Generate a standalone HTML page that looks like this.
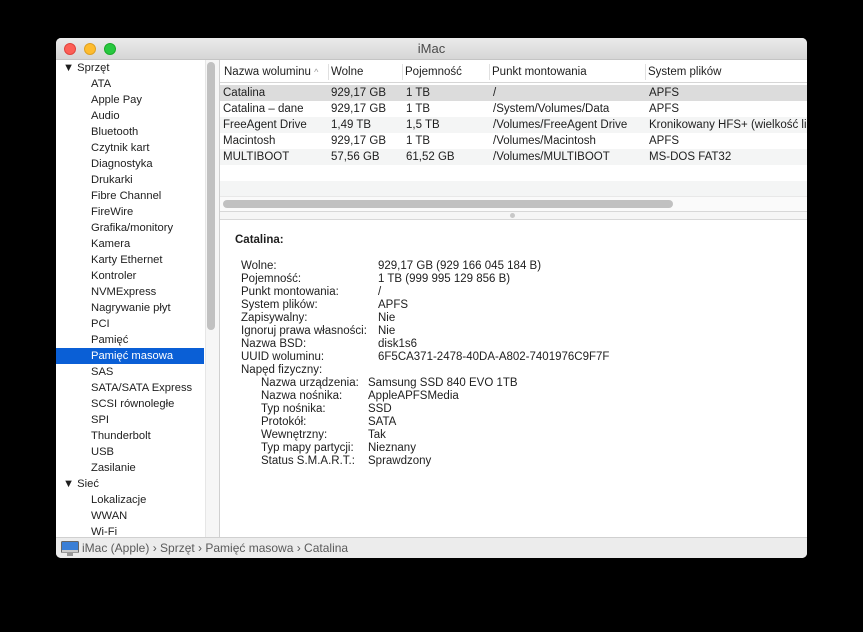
<!DOCTYPE html>
<html><head><meta charset="utf-8"><style>
*{margin:0;padding:0;box-sizing:border-box}
body{width:863px;height:632px;background:#000;font-family:"Liberation Sans",sans-serif;font-size:11.5px;color:#1e1e1e;position:relative;overflow:hidden}
.win{position:absolute;left:56px;top:38px;width:751px;height:520px;background:#fff;border-radius:5px;overflow:hidden}
.title{position:absolute;left:0;top:0;width:751px;height:22px;background:linear-gradient(#ebebeb,#d6d6d6);border-bottom:1px solid #c4c4c4;text-align:center;line-height:22px;font-size:13px;color:#4a4a4a}
.dot{position:absolute;top:5px;width:12px;height:12px;border-radius:50%}
.side{position:absolute;left:0;top:22px;width:149px;height:477px;background:#fff}
.si{position:absolute;left:35px;height:16px;line-height:16px;font-size:11.2px}
.sh{left:7px}
.sel{position:absolute;left:0;top:288px;width:148px;height:16px;background:#0a5fd6}
.track{position:absolute;left:149px;top:22px;width:14px;height:477px;background:#f6f6f6;border-left:1px solid #e6e6e6}
.thumb{position:absolute;left:151px;top:24px;width:8px;height:268px;background:#c1c1c1;border-radius:4px}
.vdiv{position:absolute;left:163px;top:22px;width:1px;height:477px;background:#d0d0d0}
.main{position:absolute;left:164px;top:22px;width:587px;height:477px}
.hdr{position:absolute;left:0;top:0;width:587px;height:23px;border-bottom:1px solid #d6d6d6;background:#fff}
.c{position:absolute;white-space:nowrap;line-height:16px}
.sep{position:absolute;top:4px;width:1px;height:16px;background:#e0e0e0}
.row{position:absolute;left:0;width:587px;height:16px}
.status{position:absolute;left:0;top:499px;width:751px;height:21px;background:#ececec;border-top:1px solid #d0d0d0;font-size:12px;color:#5a5a5a;line-height:20px}
.d{position:absolute;white-space:nowrap;line-height:13px}
</style></head><body>
<div class="win">
<div class="title">iMac
<div class="dot" style="left:8px;background:#fd5f57;border:1px solid #e0443e"></div>
<div class="dot" style="left:28px;background:#febc2e;border:1px solid #dea123"></div>
<div class="dot" style="left:48px;background:#28c840;border:1px solid #1aab29"></div>
</div>
<div class="side">
<div class="sel"></div>
<div class="si sh" style="top:0">▼ Sprzęt</div>
<div class="si" style="top:16px">ATA</div>
<div class="si" style="top:32px">Apple Pay</div>
<div class="si" style="top:48px">Audio</div>
<div class="si" style="top:64px">Bluetooth</div>
<div class="si" style="top:80px">Czytnik kart</div>
<div class="si" style="top:96px">Diagnostyka</div>
<div class="si" style="top:112px">Drukarki</div>
<div class="si" style="top:128px">Fibre Channel</div>
<div class="si" style="top:144px">FireWire</div>
<div class="si" style="top:160px">Grafika/monitory</div>
<div class="si" style="top:176px">Kamera</div>
<div class="si" style="top:192px">Karty Ethernet</div>
<div class="si" style="top:208px">Kontroler</div>
<div class="si" style="top:224px">NVMExpress</div>
<div class="si" style="top:240px">Nagrywanie płyt</div>
<div class="si" style="top:256px">PCI</div>
<div class="si" style="top:272px">Pamięć</div>
<div class="si" style="top:288px;color:#fff">Pamięć masowa</div>
<div class="si" style="top:304px">SAS</div>
<div class="si" style="top:320px">SATA/SATA Express</div>
<div class="si" style="top:336px">SCSI równoległe</div>
<div class="si" style="top:352px">SPI</div>
<div class="si" style="top:368px">Thunderbolt</div>
<div class="si" style="top:384px">USB</div>
<div class="si" style="top:400px">Zasilanie</div>
<div class="si sh" style="top:416px">▼ Sieć</div>
<div class="si" style="top:432px">Lokalizacje</div>
<div class="si" style="top:448px">WWAN</div>
<div class="si" style="top:464px">Wi-Fi</div>
</div>
<div class="track"></div><div class="thumb"></div><div class="vdiv"></div>
<div class="main">
<div class="hdr">
<div class="c" style="left:4px;top:4px">Nazwa woluminu <span style="color:#999;font-size:9px">^</span></div>
<div class="sep" style="left:108px"></div><div class="c" style="left:111px;top:4px">Wolne</div>
<div class="sep" style="left:182px"></div><div class="c" style="left:185px;top:4px">Pojemność</div>
<div class="sep" style="left:269px"></div><div class="c" style="left:272px;top:4px">Punkt montowania</div>
<div class="sep" style="left:425px"></div><div class="c" style="left:428px;top:4px">System plików</div>
</div>
<div class="row" style="top:25px;background:#dcdcdc"></div>
<div class="row" style="top:41px;background:#fff"></div>
<div class="row" style="top:57px;background:#f4f5f5"></div>
<div class="row" style="top:73px;background:#fff"></div>
<div class="row" style="top:89px;background:#f4f5f5"></div>
<div class="row" style="top:105px;background:#fff"></div>
<div class="row" style="top:121px;background:#f4f5f5;height:15px"></div>
<div class="c" style="left:3px;top:25px">Catalina</div><div class="c" style="left:111px;top:25px">929,17 GB</div><div class="c" style="left:186px;top:25px">1 TB</div><div class="c" style="left:273px;top:25px">/</div><div class="c" style="left:429px;top:25px">APFS</div>
<div class="c" style="left:3px;top:41px">Catalina – dane</div><div class="c" style="left:111px;top:41px">929,17 GB</div><div class="c" style="left:186px;top:41px">1 TB</div><div class="c" style="left:273px;top:41px">/System/Volumes/Data</div><div class="c" style="left:429px;top:41px">APFS</div>
<div class="c" style="left:3px;top:57px">FreeAgent Drive</div><div class="c" style="left:111px;top:57px">1,49 TB</div><div class="c" style="left:186px;top:57px">1,5 TB</div><div class="c" style="left:273px;top:57px">/Volumes/FreeAgent Drive</div><div class="c" style="left:429px;top:57px">Kronikowany HFS+ (wielkość li</div>
<div class="c" style="left:3px;top:73px">Macintosh</div><div class="c" style="left:111px;top:73px">929,17 GB</div><div class="c" style="left:186px;top:73px">1 TB</div><div class="c" style="left:273px;top:73px">/Volumes/Macintosh</div><div class="c" style="left:429px;top:73px">APFS</div>
<div class="c" style="left:3px;top:89px">MULTIBOOT</div><div class="c" style="left:111px;top:89px">57,56 GB</div><div class="c" style="left:186px;top:89px">61,52 GB</div><div class="c" style="left:273px;top:89px">/Volumes/MULTIBOOT</div><div class="c" style="left:429px;top:89px">MS-DOS FAT32</div>
<div style="position:absolute;left:0;top:136px;width:587px;height:15px;background:#fafafa;border-top:1px solid #e8e8e8"></div>
<div style="position:absolute;left:3px;top:140px;width:450px;height:8px;background:#c1c1c1;border-radius:4px"></div>
<div style="position:absolute;left:0;top:151px;width:587px;height:9px;background:#f6f6f6;border-top:1px solid #d8d8d8;border-bottom:1px solid #d8d8d8"></div>
<div style="position:absolute;left:290px;top:153px;width:5px;height:5px;border-radius:50%;background:#c8c8c8"></div>
<div class="d" style="left:15px;top:174px;font-weight:bold">Catalina:</div>
<div class="d" style="left:21px;top:200px">Wolne:<br>Pojemność:<br>Punkt montowania:<br>System plików:<br>Zapisywalny:<br>Ignoruj prawa własności:<br>Nazwa BSD:<br>UUID woluminu:<br>Napęd fizyczny:</div>
<div class="d" style="left:158px;top:200px">929,17 GB (929 166 045 184 B)<br>1 TB (999 995 129 856 B)<br>/<br>APFS<br>Nie<br>Nie<br>disk1s6<br>6F5CA371-2478-40DA-A802-7401976C9F7F</div>
<div class="d" style="left:41px;top:317px">Nazwa urządzenia:<br>Nazwa nośnika:<br>Typ nośnika:<br>Protokół:<br>Wewnętrzny:<br>Typ mapy partycji:<br>Status S.M.A.R.T.:</div>
<div class="d" style="left:148px;top:317px">Samsung SSD 840 EVO 1TB<br>AppleAPFSMedia<br>SSD<br>SATA<br>Tak<br>Nieznany<br>Sprawdzony</div>
</div>
<div class="status">
<svg style="position:absolute;left:5px;top:3px" width="18" height="15"><rect x="0.5" y="0.5" width="17" height="11" rx="1" fill="#3b7fd6" stroke="#666"/><rect x="1" y="9" width="16" height="2.5" fill="#ccc"/><rect x="6" y="12" width="6" height="3" fill="#999"/></svg>
<span style="position:absolute;left:26px">iMac (Apple) › Sprzęt › Pamięć masowa › Catalina</span>
</div>
</div>
</body></html>
